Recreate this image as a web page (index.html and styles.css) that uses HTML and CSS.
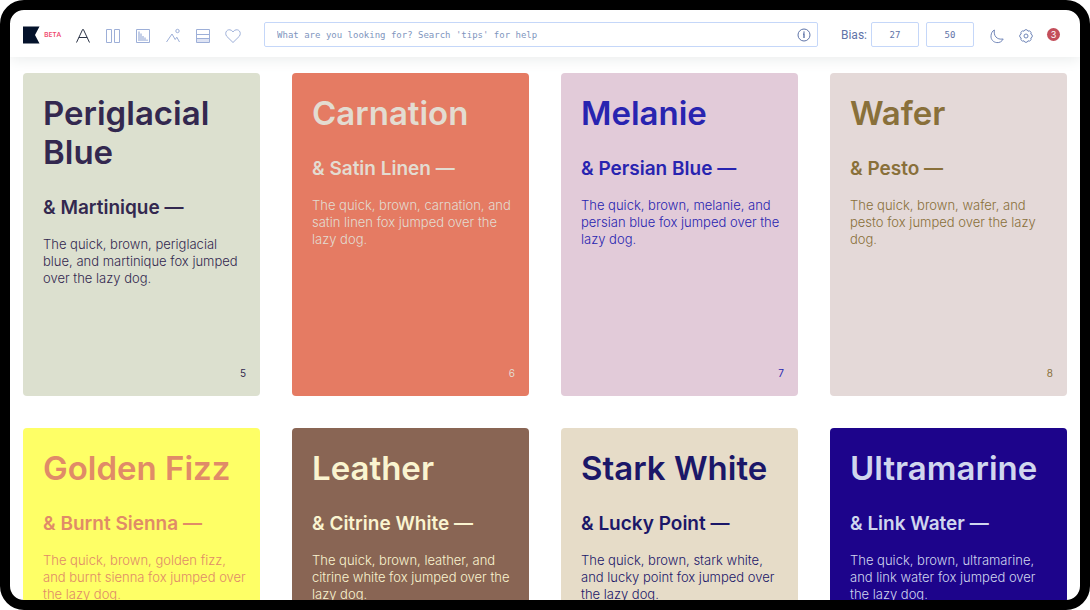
FILE: index.html
```html
<!DOCTYPE html>
<html lang="en">
<head>
<meta charset="utf-8">
<meta name="viewport" content="width=device-width, initial-scale=1">
<title>Khroma</title>
<link rel="stylesheet" href="styles.css">
</head>
<body>
<div class="frame">
  <header class="topbar">
    <div class="brand">
      <svg class="logo" viewBox="0 0 17 18" aria-label="Khroma"><path d="M0 0.5H16.5L12 9L16.5 17.5H0Z" fill="#04122b"/></svg>
      <span class="beta">BETA</span>
    </div>
    <nav class="views" aria-label="Views">
      <button class="icon active" aria-label="Type"><svg viewBox="0 0 16 16"><path d="M1.5 14.5L7.6 1.5H8.4L14.5 14.5M3.8 9.5H12.2"/></svg></button>
      <button class="icon" aria-label="Gradient"><svg viewBox="0 0 16 16"><path d="M1.5 1.5H6.5V14.5H1.5ZM9.5 1.5H14.5V14.5H9.5Z"/></svg></button>
      <button class="icon" aria-label="Palette"><svg viewBox="0 0 16 16"><path d="M1.5 1.5H14.5V14.5H1.5Z"/><path d="M4 3.5V13M6 5.5V13M8 8V13M10 9.5V13M12 11.5V13" stroke-width="1.2"/></svg></button>
      <button class="icon" aria-label="Image"><svg viewBox="0 0 16 16"><path d="M1.5 14L7 6L10.2 11.5L11.8 9.2L14.5 14"/><circle cx="12.5" cy="3" r="1.7"/></svg></button>
      <button class="icon" aria-label="List"><svg viewBox="0 0 16 16"><path d="M2 11H14V14H2Z" class="tint"/><path d="M1.5 1.5H14.5V14.5H1.5ZM1.5 6.5H14.5M1.5 10.5H14.5"/></svg></button>
      <button class="icon" aria-label="Favorites"><svg viewBox="0 0 16 16"><path d="M8 14.5L1.7 8.3C-1 4.5 2.5 0.2 6.3 2.3Q7.4 3 8 4Q8.6 3 9.7 2.3C13.5 0.2 17 4.5 14.3 8.3Z"/></svg></button>
    </nav>
    <form class="search">
      <input type="text" aria-label="Search" placeholder="What are you looking for? Search 'tips' for help">
      <button type="button" class="info" aria-label="Search tips"><svg viewBox="0 0 14 14"><circle cx="7" cy="7" r="6"/><path d="M6 6H7V10M7 3.5V4.8" class="bold"/></svg></button>
    </form>
    <div class="bias">
      <label for="bias-a">Bias:</label>
      <input id="bias-a" type="text" value="27">
      <input type="text" value="50" aria-label="Second bias">
    </div>
    <div class="tools">
      <button class="icon" aria-label="Dark mode"><svg viewBox="0 0 16 16"><path d="M5.4 2C4.4 7.5 7.5 12.1 14.2 11C12.9 13.6 10.5 14.9 7.8 14.6C4.2 14.2 1.7 11.4 2 7.8C2.2 5.1 3.3 3 5.4 2Z"/></svg></button>
      <button class="icon" aria-label="Settings"><svg viewBox="0 0 16 16"><path d="M6.01 3.2A2.05 2.05 0 0 1 9.99 3.2A2.05 2.05 0 0 1 12.8 6.01A2.05 2.05 0 0 1 12.8 9.99A2.05 2.05 0 0 1 9.99 12.8A2.05 2.05 0 0 1 6.01 12.8A2.05 2.05 0 0 1 3.2 9.99A2.05 2.05 0 0 1 3.2 6.01A2.05 2.05 0 0 1 6.01 3.2Z"/><circle cx="8" cy="8" r="2"/></svg></button>
      <button class="count" aria-label="3 notifications">3</button>
    </div>
  </header>
  <main class="grid">
    <article class="card periglacial"><h1>Periglacial Blue</h1><h2>&amp; Martinique —</h2><p>The quick, brown, periglacial blue, and martinique fox jumped over the lazy dog.</p><span class="number">5</span></article>
    <article class="card carnation"><h1>Carnation</h1><h2>&amp; Satin Linen —</h2><p>The quick, brown, carnation, and satin linen fox jumped over the lazy dog.</p><span class="number">6</span></article>
    <article class="card melanie"><h1>Melanie</h1><h2>&amp; Persian Blue —</h2><p>The quick, brown, melanie, and persian blue fox jumped over the lazy dog.</p><span class="number">7</span></article>
    <article class="card wafer"><h1>Wafer</h1><h2>&amp; Pesto —</h2><p>The quick, brown, wafer, and pesto fox jumped over the lazy dog.</p><span class="number">8</span></article>
    <article class="card golden"><h1>Golden Fizz</h1><h2>&amp; Burnt Sienna —</h2><p>The quick, brown, golden fizz, and burnt sienna fox jumped over the lazy dog.</p></article>
    <article class="card leather"><h1>Leather</h1><h2>&amp; Citrine White —</h2><p>The quick, brown, leather, and citrine white fox jumped over the lazy dog.</p></article>
    <article class="card stark"><h1>Stark White</h1><h2>&amp; Lucky Point —</h2><p>The quick, brown, stark white, and lucky point fox jumped over the lazy dog.</p></article>
    <article class="card ultramarine"><h1>Ultramarine</h1><h2>&amp; Link Water —</h2><p>The quick, brown, ultramarine, and link water fox jumped over the lazy dog.</p></article>
  </main>
</div>
</body>
</html>
```
FILE: styles.css
```css
* { box-sizing: border-box; }
html { background: #fff; }
body { margin: 0; font-family: Inter, sans-serif; }
button, input { font: inherit; color: inherit; }
button { padding: 0; border: 0; background: none; cursor: pointer; }

.frame {
  display: flex;
  flex-direction: column;
  height: 100vh;
  border: 10px solid #000;
  border-radius: 24px;
  background: #fff;
  overflow: hidden;
}

.topbar {
  display: flex;
  align-items: center;
  flex: none;
  padding: 12px 20px 10px 13px;
  color: #5f74a8;
  box-shadow: 0 2px 14px #e8ebeb;
}
.brand { display: flex; align-items: center; gap: 4px; }
.logo { width: 17px; height: 18px; }
.beta { color: #f0486e; font: 600 7px/10px "Open Sans", sans-serif; }

.views { display: flex; gap: 14px; margin-left: 14px; }
.icon { display: flex; padding-top: 2px; color: #9dafd8; }
.icon svg { width: 16px; height: 16px; }
.icon.active { color: #2c3447; }
svg { fill: none; stroke: currentColor; stroke-width: 1; }
.logo { stroke: none; }
.tint { fill: #dfe4f4; stroke: none; }

.search {
  display: flex;
  align-items: center;
  flex: 1;
  margin: 0 23px;
  padding-right: 6px;
  border: 1px solid #c5d7f9;
  border-radius: 2px;
}
.search input {
  flex: 1;
  min-width: 0;
  height: 23px;
  padding: 0 12px;
  border: 0;
  outline: 0;
  background: none;
  font: 9px/12px "DejaVu Sans Mono", monospace;
}
.search input::placeholder { color: #8095be; opacity: 1; }
.info { display: flex; }
.info svg { width: 14px; height: 14px; }
.info .bold { stroke-width: 1.4; }

.bias { display: flex; align-items: center; gap: 7px; font: 12px/16px Roboto, sans-serif; }
.bias label { margin-right: -3px; }
.bias input {
  width: 48px;
  height: 25px;
  padding: 0;
  border: 1px solid #c5d7f9;
  border-radius: 2px;
  background: none;
  text-align: center;
  font: 9px/12px "DejaVu Sans Mono", monospace;
}

.tools { display: flex; align-items: center; gap: 13px; margin-left: 15px; }
.tools .icon { color: #7186b8; }
.count {
  width: 13px;
  height: 13px;
  border-radius: 50%;
  background: #c34e5a;
  color: #fff;
  font: 9px/13px Inter, sans-serif;
  text-align: center;
}

.grid {
  display: grid;
  grid-template-columns: repeat(4, 1fr);
  grid-auto-rows: minmax(323px, auto);
  gap: 32px;
  flex: 1;
  min-height: 0;
  padding: 16px 13px;
  overflow-y: auto;
  scrollbar-width: none;
}
.card {
  display: flex;
  flex-direction: column;
  padding: 21px 14px 15px 20px;
  border-radius: 4px;
}
h1, h2, p { margin: 0; }
h1 { margin-bottom: 24px; font-size: 33px; font-weight: 600; line-height: 39px; }
h2 { margin-bottom: 16px; font-size: 19px; font-weight: 600; line-height: 24px; }
p { font-size: 13px; font-weight: 300; line-height: 17px; }
.number { margin-top: auto; align-self: flex-end; font-size: 10px; line-height: 16px; }

.periglacial { background: #dce0cf; color: #33284f; }
.carnation { background: #e57b63; color: #e3dcd1; }
.melanie { background: #e2cbd9; color: #2824b0; }
.wafer { background: #e4d9d8; color: #89703a; }
.golden { background: #feff66; color: #e08b68; }
.leather { background: #896554; color: #faf4d0; }
.stark { background: #e6dcc8; color: #1b1768; }
.ultramarine { background: #1d048b; color: #d0d6ee; }
```
